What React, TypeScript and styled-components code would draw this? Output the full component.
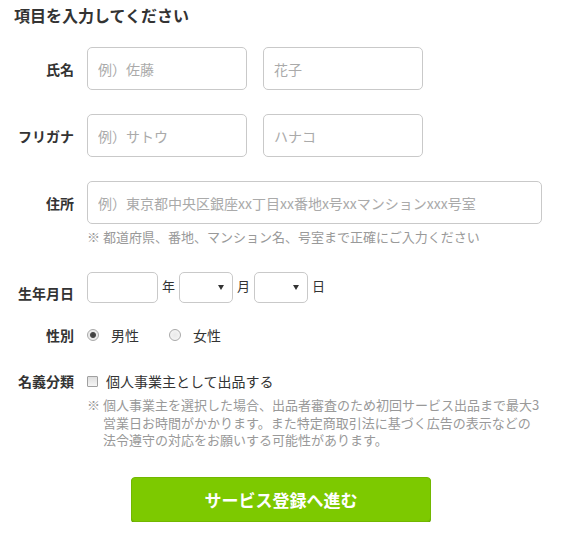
import React from "react";
import styled, { createGlobalStyle } from "styled-components";

const GlobalStyle = createGlobalStyle`
  html, body { margin: 0; padding: 0; background: #fff; }
  body {
    font-family: "Noto Sans CJK JP", "Noto Sans", sans-serif;
    color: #333;
  }
  * { box-sizing: border-box; }
`;

const Page = styled.div`
  width: 562px;
  padding: 4px 0 0 0;
`;

const Title = styled.h2`
  margin: 0 0 0 14px;
  font-size: 16px;
  line-height: 22px;
  font-weight: bold;
  color: #333;
`;

const Form = styled.form`
  margin-top: 21px;
  display: flex;
  flex-direction: column;
`;

const Field = styled.div<{ $mt: number }>`
  display: grid;
  grid-template-columns: 74px 1fr;
  column-gap: 13px;
  align-items: start;
  margin-top: ${(p) => p.$mt}px;
`;

const Label = styled.div<{ $h: number; $pt?: number }>`
  height: ${(p) => p.$h}px;
  padding-top: ${(p) => p.$pt ?? 0}px;
  display: flex;
  align-items: center;
  justify-content: flex-end;
  font-size: 14px;
  font-weight: bold;
  color: #333;
  white-space: nowrap;
`;

const Controls = styled.div<{ $gap: number }>`
  display: flex;
  align-items: center;
  gap: ${(p) => p.$gap}px;
`;

const Stack = styled.div`
  display: flex;
  flex-direction: column;
`;

const TextInput = styled.input<{ $w: number; $h?: number }>`
  width: ${(p) => p.$w}px;
  height: ${(p) => p.$h ?? 43}px;
  border: 1px solid #c9c9c9;
  border-radius: 5px;
  padding: 0 10px;
  font-family: inherit;
  font-size: 14px;
  color: #333;
  background: #fff;
  outline: none;
  &::placeholder { color: #aaa; }
`;

const Unit = styled.span`
  font-size: 13px;
  color: #333;
  line-height: 20px;
  margin-top: -4px;
`;

const SelectWrap = styled.div`
  position: relative;
  width: 54px;
  height: 31px;
  &::after {
    content: "";
    position: absolute;
    right: 9px;
    top: 13px;
    border-left: 3.5px solid transparent;
    border-right: 3.5px solid transparent;
    border-top: 5px solid #333;
    pointer-events: none;
  }
`;

const Select = styled.select`
  appearance: none;
  width: 100%;
  height: 100%;
  border: 1px solid #c9c9c9;
  border-radius: 5px;
  background: #fff;
  font-family: inherit;
  font-size: 13px;
  outline: none;
`;

const Hint = styled.div`
  margin-top: 4px;
  font-size: 13px;
  line-height: 18px;
  color: #999;
`;

const Note = styled.div`
  margin-top: 5px;
  width: 455px;
  display: flex;
  font-size: 13px;
  line-height: 17.5px;
  color: #999;
`;

const NoteMark = styled.span`
  flex: none;
  width: 16px;
`;

const NoteText = styled.span`
  flex: 1;
`;

const Choice = styled.label<{ $gap: number }>`
  display: inline-flex;
  align-items: center;
  gap: ${(p) => p.$gap}px;
  font-size: 14px;
  line-height: 20px;
  color: #333;
`;

const Radio = styled.input.attrs({ type: "radio" })`
  appearance: none;
  margin: 0;
  width: 12px;
  height: 12px;
  border: 1px solid #a9a9a9;
  border-radius: 50%;
  background: radial-gradient(circle, #e9e9e9 0, #f4f4f4 70%);
  &:checked {
    background: radial-gradient(circle, #3c3c3c 0, #4a4a4a 2.5px, #e8e8e8 3.5px, #f6f6f6 100%);
  }
`;

const Checkbox = styled.input.attrs({ type: "checkbox" })`
  appearance: none;
  margin: 0;
  width: 11px;
  height: 11px;
  border: 1px solid #a0a0a0;
  border-radius: 1px;
  background: linear-gradient(#dedede, #f6f6f6);
`;

const SubmitButton = styled.button`
  display: block;
  margin: 28px auto 0;
  width: 300px;
  height: 45px;
  border: 1px solid #72b800;
  border-radius: 4px;
  background: #7dc900;
  box-shadow: 0 1px 0 #65a500;
  color: #fff;
  font-family: inherit;
  font-size: 17px;
  font-weight: bold;
  cursor: pointer;
`;

export default function App() {
  return (
    <Page>
      <GlobalStyle />
      <Title>項目を入力してください</Title>
      <Form onSubmit={(e) => e.preventDefault()}>
        <Field $mt={0}>
          <Label $h={43}>氏名</Label>
          <Controls $gap={16}>
            <TextInput $w={160} placeholder="例）佐藤" />
            <TextInput $w={160} placeholder="花子" />
          </Controls>
        </Field>
        <Field $mt={24}>
          <Label $h={43}>フリガナ</Label>
          <Controls $gap={16}>
            <TextInput $w={160} placeholder="例）サトウ" />
            <TextInput $w={160} placeholder="ハナコ" />
          </Controls>
        </Field>
        <Field $mt={24}>
          <Label $h={43}>住所</Label>
          <Stack>
            <TextInput $w={455} placeholder="例）東京都中央区銀座xx丁目xx番地x号xxマンションxxx号室" />
            <Hint>※ 都道府県、番地、マンション名、号室まで正確にご入力ください</Hint>
          </Stack>
        </Field>
        <Field $mt={26}>
          <Label $h={31} $pt={10}>生年月日</Label>
          <Controls $gap={4}>
            <TextInput $w={71} $h={31} />
            <Unit>年</Unit>
            <SelectWrap>
              <Select defaultValue="">
                <option value=""></option>
              </Select>
            </SelectWrap>
            <Unit>月</Unit>
            <SelectWrap>
              <Select defaultValue="">
                <option value=""></option>
              </Select>
            </SelectWrap>
            <Unit>日</Unit>
          </Controls>
        </Field>
        <Field $mt={22}>
          <Label $h={20}>性別</Label>
          <Controls $gap={30}>
            <Choice $gap={12}>
              <Radio name="gender" defaultChecked />
              男性
            </Choice>
            <Choice $gap={12}>
              <Radio name="gender" />
              女性
            </Choice>
          </Controls>
        </Field>
        <Field $mt={26}>
          <Label $h={20}>名義分類</Label>
          <Stack>
            <Choice $gap={8}>
              <Checkbox />
              個人事業主として出品する
            </Choice>
            <Note>
              <NoteMark>※</NoteMark>
              <NoteText>
                個人事業主を選択した場合、出品者審査のため初回サービス出品まで最大3営業日お時間がかかります。また特定商取引法に基づく広告の表示などの法令遵守の対応をお願いする可能性があります。
              </NoteText>
            </Note>
          </Stack>
        </Field>
        <SubmitButton type="submit">サービス登録へ進む</SubmitButton>
      </Form>
    </Page>
  );
}
